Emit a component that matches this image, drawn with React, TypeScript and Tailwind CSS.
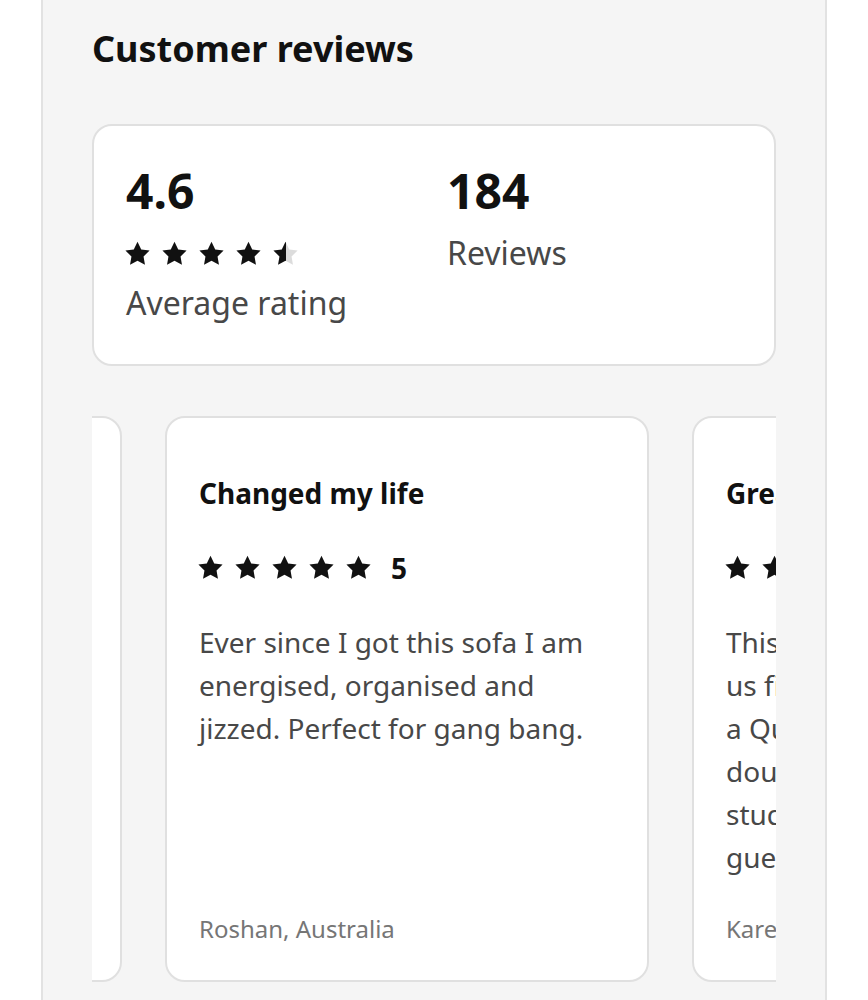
import React from "react";

const STAR = "M12 1.5l3.09 6.26 6.91 1.01-5 4.87 1.18 6.88L12 17.27l-6.18 3.25L7 13.64 2 8.77l6.91-1.01L12 1.5z";

function Star({ half = false, id }: { half?: boolean; id?: string }) {
  return (
    <svg viewBox="0 0 24 24" className="w-[29px] h-[29px] shrink-0" aria-hidden="true">
      {half ? (
        <>
          <defs>
            <linearGradient id={id} x1="0" x2="1" y1="0" y2="0">
              <stop offset="50%" stopColor="#111111" />
              <stop offset="50%" stopColor="#dcdcdc" />
            </linearGradient>
          </defs>
          <path d={STAR} fill={`url(#${id})`} />
        </>
      ) : (
        <path d={STAR} fill="#111111" />
      )}
    </svg>
  );
}

function Stars({ count, half }: { count: number; half?: boolean }) {
  return (
    <div className="flex items-center gap-[8px] -ml-[3px]">
      {Array.from({ length: count }).map((_, i) => (
        <Star key={i} />
      ))}
      {half && <Star half id="halfstar" />}
    </div>
  );
}

type Review = {
  title: string;
  rating: number;
  lines: string[];
  author: string;
};

const reviews: Review[] = [
  {
    title: "Love it",
    rating: 5,
    lines: ["Really comfortable and easy to", "put together. Looks great in", "our living room."],
    author: "Sam, Australia",
  },
  {
    title: "Changed my life",
    rating: 5,
    lines: ["Ever since I got this sofa I am", "energised, organised and", "jizzed. Perfect for gang bang."],
    author: "Roshan, Australia",
  },
  {
    title: "Great sofa bed",
    rating: 5,
    lines: [
      "This sofa is great, it has let",
      "us fit a comfortable bed into",
      "a Queen-sized space. It's a",
      "double bed that feels very",
      "studio-friendly, perfect for",
      "guests when they stay.",
    ],
    author: "Karen, Australia",
  },
];

function ReviewCard({ r }: { r: Review }) {
  return (
    <div className="w-[484px] h-[566px] shrink-0 bg-white border-2 border-[#e0e0e0] rounded-[20px] pl-[32px] pr-[32px] pt-[56px] pb-[34px] flex flex-col">
      <div className="text-[28px] leading-[38px] font-bold text-[#111111] whitespace-nowrap">{r.title}</div>
      <div className="flex items-center mt-[42px]">
        <Stars count={r.rating} />
        <span className="ml-[18px] text-[28px] leading-[29px] font-bold text-[#111111]">{r.rating}</span>
      </div>
      <div className="mt-[38px] text-[28px] leading-[43px] text-[#484848] whitespace-nowrap">
        {r.lines.map((l, i) => (
          <div key={i}>{l}</div>
        ))}
      </div>
      <div className="mt-auto text-[24px] leading-[34px] text-[#767676] whitespace-nowrap">{r.author}</div>
    </div>
  );
}

export default function App() {
  return (
    <div className="w-[868px] h-[1000px] bg-white overflow-hidden" style={{ fontFamily: '"Noto Sans", "Open Sans", Arial, sans-serif' }}>
      <div className="ml-[41px] w-[786px] h-full bg-[#f5f5f5] border-x-2 border-[#e2e2e2] pl-[49px] pr-[49px]">
        <h2 className="pt-[28px] text-[36px] leading-[42px] font-bold text-[#111111]">Customer reviews</h2>

        <div className="mt-[54px] bg-white border-2 border-[#e0e0e0] rounded-[20px] pl-[32px] pt-[37px] pb-[39px] flex">
          <div className="w-[321px]">
            <div className="text-[48px] leading-[56px] font-bold text-[#111111]">4.6</div>
            <div className="mt-[21px]">
              <Stars count={4} half />
            </div>
            <div className="mt-[12px] text-[32px] leading-[44px] text-[#484848]">Average rating</div>
          </div>
          <div>
            <div className="text-[48px] leading-[56px] font-bold text-[#111111]">184</div>
            <div className="mt-[12px] text-[32px] leading-[44px] text-[#484848]">Reviews</div>
          </div>
        </div>

        <div className="mt-[50px] overflow-hidden">
          <div className="flex gap-[43px] -ml-[454px]">
            {reviews.map((r, i) => (
              <ReviewCard key={i} r={r} />
            ))}
          </div>
        </div>
      </div>
    </div>
  );
}
